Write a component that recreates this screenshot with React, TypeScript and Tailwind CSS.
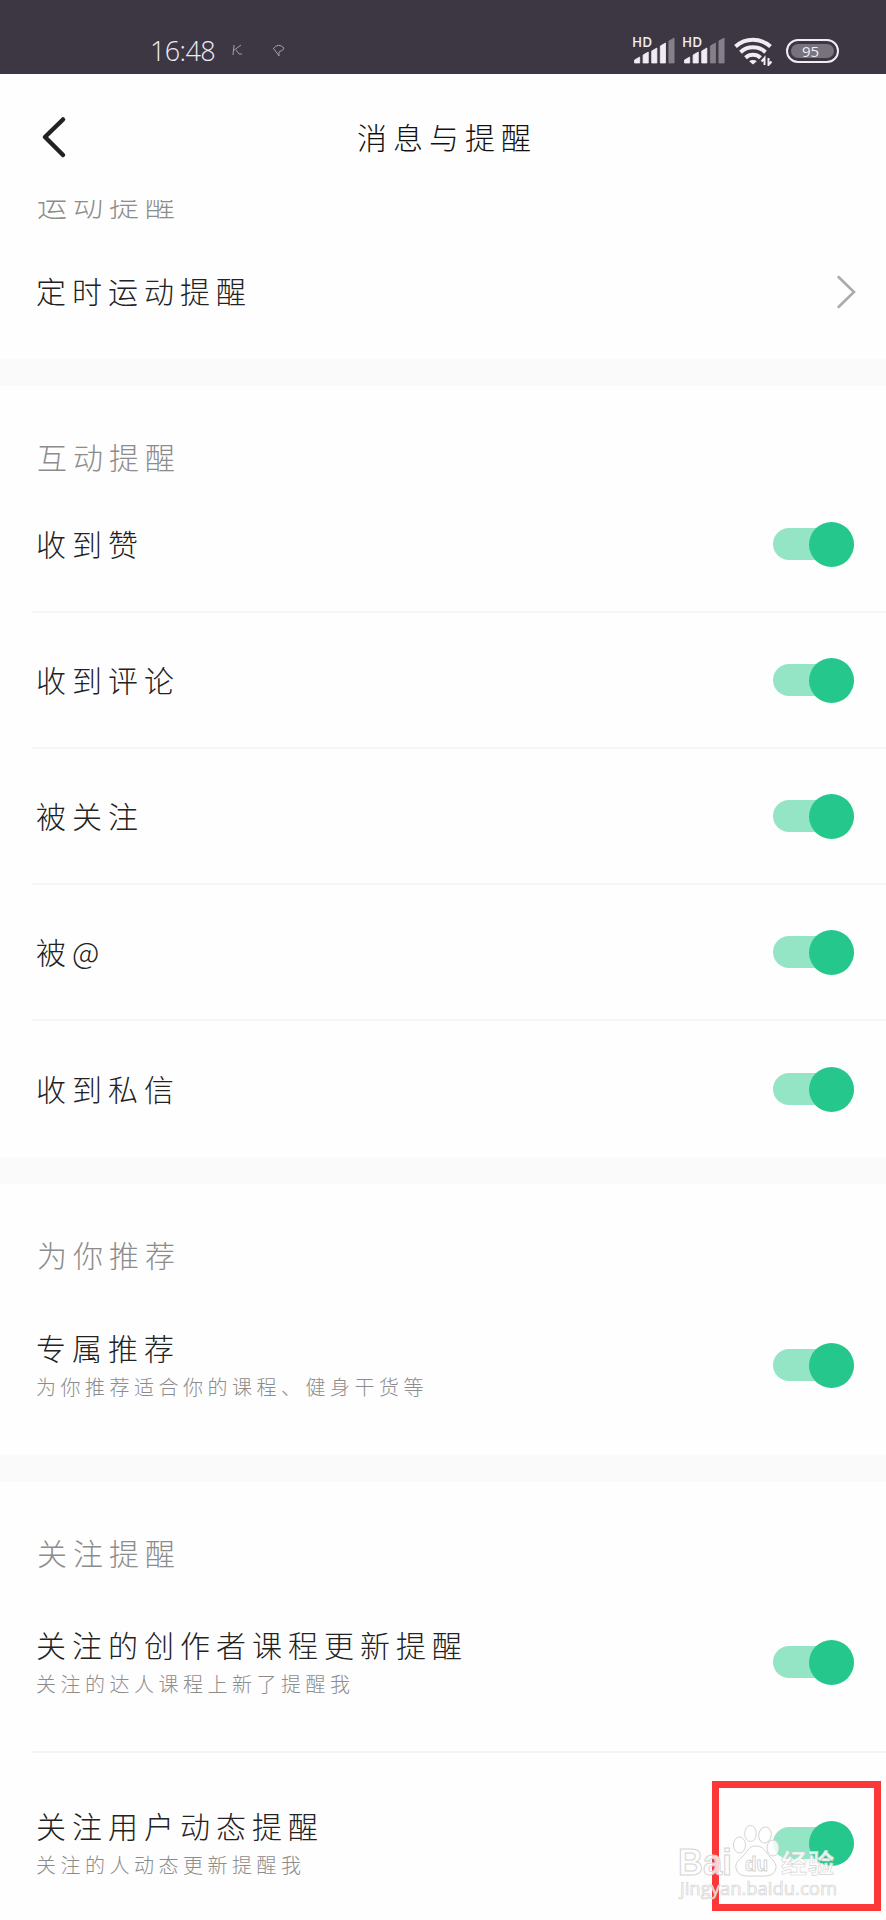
import type { ReactNode } from "react";

type Item = { title: string; note?: string };

const interactions: Item[] = [
  { title: "收到赞" },
  { title: "收到评论" },
  { title: "被关注" },
  { title: "被@" },
  { title: "收到私信" },
];

const recommendations: Item[] = [
  { title: "专属推荐", note: "为你推荐适合你的课程、健身干货等" },
];

const follows: Item[] = [
  { title: "关注的创作者课程更新提醒", note: "关注的达人课程上新了提醒我" },
  { title: "关注用户动态提醒", note: "关注的人动态更新提醒我" },
];

function Signal({ level }: { level: number }) {
  return (
    <svg className="overflow-visible" width="42" height="30" viewBox="0 0 42 30" fill="#efecf3">
      <text x="-1" y="11" fontSize="13.5" fontWeight="600" fontFamily="Open Sans, sans-serif">
        HD
      </text>
      {[6, 11, 15, 20, 25].map((h, i) => (
        <path
          key={h}
          d={`M${1.5 + i * 8.6} 27v${-h + 3}l5.2 -3v${h}z`}
          stroke="#efecf3"
          strokeWidth="0.8"
          strokeLinejoin="round"
          opacity={i < level ? 1 : 0.4}
        />
      ))}
    </svg>
  );
}

function Wifi() {
  return (
    <svg width="40" height="30" viewBox="0 0 40 30" fill="none" stroke="#efecf3" strokeWidth="4">
      <path d="M1.5 10.5a26 26 0 0 1 35 0" />
      <path d="M6.5 16.2a18.5 18.5 0 0 1 25 0" />
      <path d="M11.5 21.8a11 11 0 0 1 15 0" />
      <path d="M19 28.5l-3.8 -3.2a5 4 0 0 1 7.6 0z" fill="#efecf3" stroke="none" />
      <path d="M30.5 29v-7l-3 3.5M34.5 22v7l3 -3.5" strokeWidth="2" />
    </svg>
  );
}

function StatusBar() {
  return (
    <div className="flex h-[74px] shrink-0 items-start bg-[#3d3743] pt-[36px] text-[#efecf3]">
      <span className="ml-[150px] w-[82px] font-['Open_Sans'] text-[27px] leading-[30px] tracking-[-0.6px]">
        16:48
      </span>
      <svg width="54" height="30" viewBox="0 0 54 30" fill="none" stroke="#a39eaa" strokeWidth="1">
        <path d="M2 9l-1 10M9 9l-8 6M4 14l3 4h3" />
        <path d="M41 13q5 -7 11 -1q0 2 -5 4M42 13l5 7v-4" />
      </svg>
      <div className="ml-[347px] flex">
        <Signal level={4} />
        <div className="ml-[8px] flex">
          <Signal level={3} />
        </div>
        <div className="ml-[9px] flex">
          <Wifi />
        </div>
      </div>
      <div className="mt-[3px] ml-[12px] flex h-[24px] w-[53px] rounded-full border-2 border-[#efecf3] p-[3px]">
        <div className="flex flex-1 items-center justify-center rounded-full bg-[#77727d] pr-1 font-['Open_Sans'] text-[15px] leading-none font-normal">
          95
        </div>
      </div>
    </div>
  );
}

function Header() {
  return (
    <header className="flex h-[126px] shrink-0 items-center px-[36px]">
      <svg width="36" height="48" viewBox="0 0 36 48" fill="none" stroke="#222" strokeWidth="4.5" strokeLinecap="round" strokeLinejoin="round">
        <path d="M27 6.5L9 24L27 42" />
      </svg>
      <h1 className="flex-1 pr-[28px] pb-[2px] text-center text-[30px] leading-[44px] tracking-[6px] text-[#111]">
        消息与提醒
      </h1>
    </header>
  );
}

function Toggle() {
  return (
    <div className="flex h-[32px] w-[81px] shrink-0 items-center justify-end rounded-full bg-[#93e5c5]">
      <div className="size-[45px] shrink-0 rounded-full bg-[#26c78c]" />
    </div>
  );
}

function Heading({ children }: { children: ReactNode }) {
  return (
    <h2 className="flex h-[91px] shrink-0 items-end pb-[2px] pl-[37px] text-[30px] leading-[37px] tracking-[6px] text-[#8c8c8c]">
      {children}
    </h2>
  );
}

function Row({ item, last }: { item: Item; last: boolean }) {
  return (
    <div className={`ml-[32px] flex shrink-0 items-center justify-between pr-[32px] pl-[4px] ${item.note ? "h-[180px]" : "h-[136px]"} ${last ? "" : "border-b-2 border-[#f5f5f5]"}`}>
      <div className="pb-[3px]">
        <div className="text-[30px] leading-[44px] tracking-[6px] text-[#222]">{item.title}</div>
        {item.note && (
          <div className="mt-[2px] text-[20px] leading-[32px] tracking-[4.5px] text-[#8c8c8c]">{item.note}</div>
        )}
      </div>
      <Toggle />
    </div>
  );
}

function Section({ title, items }: { title: string; items: Item[] }) {
  return (
    <section className="flex shrink-0 flex-col border-t-[27px] border-[#fafafa]">
      <Heading>{title}</Heading>
      {items.map((item, i) => (
        <Row key={item.title} item={item} last={i === items.length - 1} />
      ))}
    </section>
  );
}

function Watermark() {
  return (
    <svg className="absolute top-[1815px] left-[672px]" width="172" height="90" viewBox="0 0 172 90" fill="#fff" fillOpacity="0.8" stroke="#d4d4d4" strokeWidth="1">
      <text x="6" y="60" fontSize="36" fontWeight="700" fontFamily="Liberation Sans" textLength="54" lengthAdjust="spacingAndGlyphs">
        Bai
      </text>
      <ellipse cx="67.5" cy="30" rx="6" ry="8" />
      <ellipse cx="78.5" cy="18.5" rx="5.8" ry="8" />
      <ellipse cx="93" cy="20" rx="6.2" ry="8" transform="rotate(10 93 20)" />
      <ellipse cx="101" cy="33" rx="6" ry="8" />
      <path d="M84 31c-8 0-9 7-14 11s-8 8-5 14 11 5 19 5 16 1 19-5-1-10-5-14-6-11-14-11z" />
      <text x="73" y="56" fontSize="20" fontWeight="700" fontFamily="Liberation Sans" textLength="23" lengthAdjust="spacingAndGlyphs">
        du
      </text>
      <text x="109" y="58" fontSize="26" fontWeight="700" fontFamily="Noto Sans CJK SC" textLength="53" strokeWidth="0.6" fillOpacity="0.9">
        经验
      </text>
      <text x="8" y="80" fontSize="19" fontWeight="400" fontFamily="Open Sans" textLength="157" strokeWidth="0.7" lengthAdjust="spacingAndGlyphs">
        jingyan.baidu.com
      </text>
    </svg>
  );
}

export default function App() {
  return (
    <div className="relative flex h-[1920px] w-[886px] flex-col overflow-hidden bg-[#fefefe] font-['Noto_Sans_CJK_SC',sans-serif] font-light">
      <StatusBar />
      <Header />
      {/* heading scrolled halfway under the header */}
      <div className="flex h-[24px] shrink-0 flex-col justify-end overflow-hidden">
        <Heading>运动提醒</Heading>
      </div>
      <div className="flex h-[135px] shrink-0 items-center justify-between pr-[30px] pl-[36px]">
        <span className="pb-[3px] text-[30px] leading-[44px] tracking-[6px] text-[#222]">定时运动提醒</span>
        <svg className="mt-px" width="20" height="36" viewBox="0 0 20 36" fill="none" stroke="#aaa" strokeWidth="2.5" strokeLinecap="round">
          <path d="M2.5 3L18 18L2.5 33" />
        </svg>
      </div>
      <Section title="互动提醒" items={interactions} />
      <Section title="为你推荐" items={recommendations} />
      <Section title="关注提醒" items={follows} />
      <div className="absolute top-[1781px] left-[712px] h-[130px] w-[169px] border-[7px] border-[#fc3737]" />
      <Watermark />
    </div>
  );
}
